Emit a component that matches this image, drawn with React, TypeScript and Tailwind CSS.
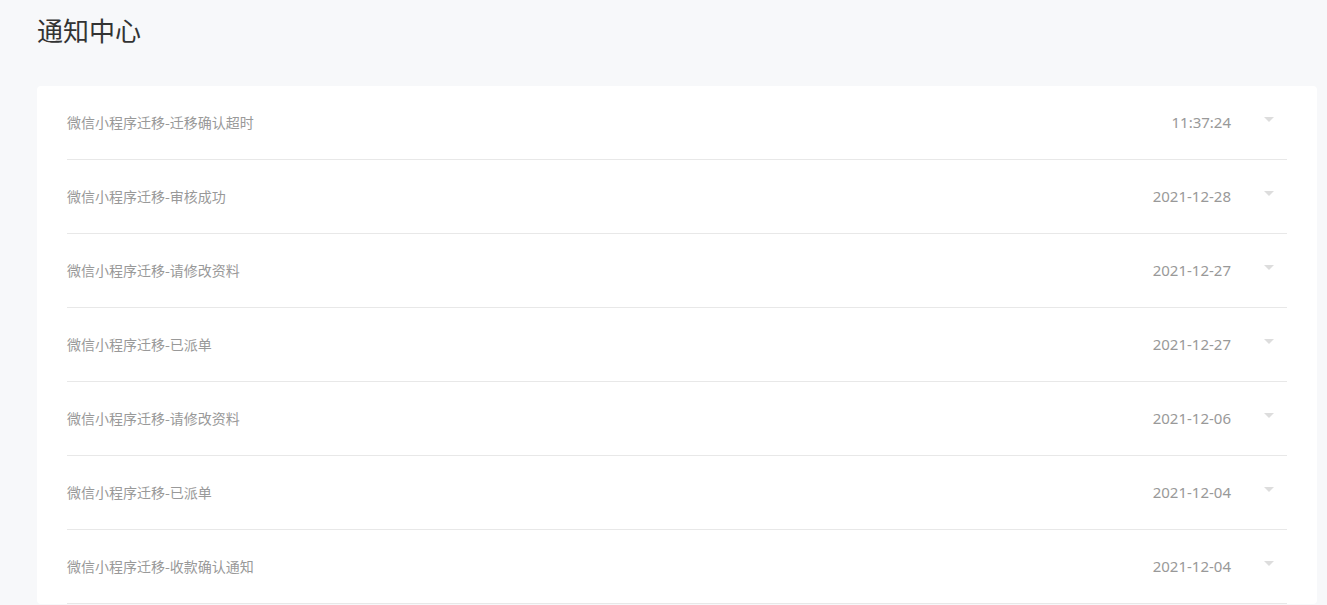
import React from "react";

const items = [
  { title: "微信小程序迁移-迁移确认超时", time: "11:37:24" },
  { title: "微信小程序迁移-审核成功", time: "2021-12-28" },
  { title: "微信小程序迁移-请修改资料", time: "2021-12-27" },
  { title: "微信小程序迁移-已派单", time: "2021-12-27" },
  { title: "微信小程序迁移-请修改资料", time: "2021-12-06" },
  { title: "微信小程序迁移-已派单", time: "2021-12-04" },
  { title: "微信小程序迁移-收款确认通知", time: "2021-12-04" },
];

export default function App() {
  return (
    <div
      className="min-h-screen bg-[#f7f8fa] pl-[37px] pr-[10px] pt-[13px]"
      style={{ fontFamily: '"Noto Sans CJK SC", "Noto Sans", sans-serif' }}
    >
      <h1 className="text-[26px] leading-[34px] text-[#333333] font-normal">通知中心</h1>
      <div className="mt-[39px] w-[1280px] rounded-[4px] bg-white px-[30px]">
        {items.map((it, i) => (
          <div
            key={i}
            className="flex h-[74px] items-center border-b border-[#e8e8e8]"
          >
            <div className="flex-1 text-[14px] text-[#999999]">{it.title}</div>
            <div
              className="text-[15px] text-[#999999]"
              style={{ fontFamily: '"Noto Sans", "Noto Sans CJK SC", sans-serif' }}
            >
              {it.time}
            </div>
            <div className="ml-[33px] mr-[13px] flex w-[10px] justify-center -mt-[6px]">
              <div className="h-0 w-0 border-l-[5px] border-r-[5px] border-t-[5px] border-l-transparent border-r-transparent border-t-[#dddddd]" />
            </div>
          </div>
        ))}
      </div>
    </div>
  );
}
